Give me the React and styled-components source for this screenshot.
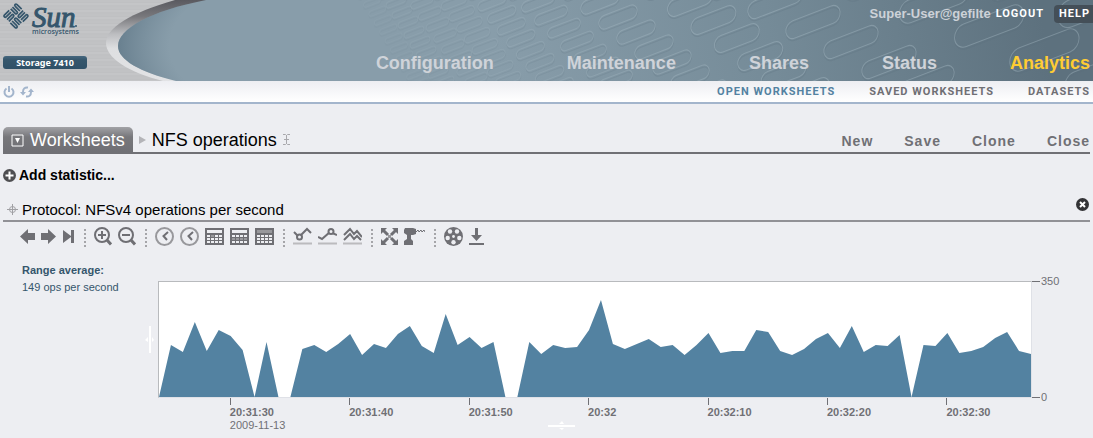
import { useState } from "react";
import styled, { createGlobalStyle } from "styled-components";

const GlobalStyle = createGlobalStyle`
  * {
    box-sizing: border-box;
  }

  body {
    background: #edeef2;
    color: #000;
    font-family: "Liberation Sans", Arial, sans-serif;
    margin: 0;
  }

  button {
    background: none;
    border: none;
    color: inherit;
    cursor: pointer;
    font: inherit;
    padding: 0;
  }

  a {
    color: inherit;
    text-decoration: none;
  }

  svg {
    display: block;
  }
`;

const mainLinks = ["Configuration", "Maintenance", "Shares", "Status", "Analytics"];
const subLinks = ["OPEN WORKSHEETS", "SAVED WORKSHEETS", "DATASETS"];
const actions = ["New", "Save", "Clone", "Close"];
const times = ["20:31:30", "20:31:40", "20:31:50", "20:32", "20:32:10", "20:32:20", "20:32:30"];

// one sample per second, in chart units
const samples = [
  0, 52, 45, 75, 46, 67, 61, 47, 0, 55, 0, 0, 48, 52, 45, 53, 63, 42, 53, 49, 63, 71, 51, 44, 83,
  52, 60, 49, 55, 0, 0, 55, 43, 52, 49, 50, 67, 97, 53, 48, 53, 58, 50, 52, 42, 52, 64, 44, 46, 46,
  67, 65, 46, 42, 48, 58, 64, 49, 71, 45, 52, 51, 62, 0, 52, 51, 64, 44, 46, 50, 59, 65, 46, 43,
];
const CHART_TOP = 115;

// diagonal chains of embossed pills, growing to the right
const chains = [
  { x: 372, slope: 0.6, dy: 9, w: 18, h: 5, o: 0.12 },
  { x: 396, slope: 0.6, dy: 10, w: 21, h: 6, o: 0.18 },
  { x: 422, slope: 0.7, dy: 11, w: 24, h: 7, o: 0.2 },
  { x: 454, slope: 0.7, dy: 11, w: 27, h: 8, o: 0.24 },
  { x: 492, slope: 0.8, dy: 12, w: 30, h: 9, o: 0.3 },
  { x: 538, slope: 1, dy: 13, w: 35, h: 10, o: 0.38 },
  { x: 600, slope: 1.2, dy: 15, w: 41, h: 13, o: 0.45 },
  { x: 690, slope: 1.3, dy: 18, w: 48, h: 16, o: 0.5 },
  { x: 775, slope: 1.9, dy: 20, w: 58, h: 17, o: 0.5 },
  { x: 934, slope: 2.3, dy: 24, w: 74, h: 22, o: 0.5 },
  { x: 1100, slope: 2.5, dy: 28, w: 90, h: 26, o: 0.5 },
];

function HeaderArt() {
  const pills = chains.flatMap((c) => {
    const list = [];
    for (let y = -c.dy; y < 100; y += c.dy) {
      list.push({ ...c, cx: c.x + y * c.slope, cy: y + 2 });
    }
    return list;
  });

  return (
    <ArtSvg width="100%" height="81" aria-hidden="true">
      <defs>
        <linearGradient id="sea" gradientUnits="userSpaceOnUse" x1="500" y1="81" x2="1040" y2="0">
          <stop offset="0" stopColor="#889daa" />
          <stop offset="0.5" stopColor="#758b98" />
          <stop offset="1" stopColor="#5d717e" />
        </linearGradient>
        <radialGradient id="edge" gradientUnits="userSpaceOnUse" cx="330" cy="46" r="214" gradientTransform="translate(0 23) scale(1 0.5)">
          <stop offset="0.75" stopColor="#6b8291" stopOpacity="0" />
          <stop offset="1" stopColor="#5f7787" stopOpacity="0.8" />
        </radialGradient>
        <linearGradient id="rim" x1="0" y1="0" x2="0" y2="1">
          <stop offset="0" stopColor="#5a5a60" />
          <stop offset="0.2" stopColor="#77777b" />
          <stop offset="0.42" stopColor="#bcbdc0" />
          <stop offset="0.6" stopColor="#dedfe1" />
          <stop offset="1" stopColor="#e2e3e5" />
        </linearGradient>
      </defs>
      <path d="M175 0C130 13 106 28 106 43C106 58 128 72 163 81H240V0Z" fill="url(#rim)" />
      <path d="M206 0C150 11 118 29 118 46C118 60 140 72 176 81H330V0Z" fill="#889daa" />
      <path d="M206 0C150 11 118 29 118 46C118 60 140 72 176 81H330V0Z" fill="url(#edge)" />
      <rect x="329" width="100%" height="81" fill="url(#sea)" />
      {pills.map((p, i) => (
        <g key={i} transform={`translate(${p.cx} ${p.cy}) rotate(-21) skewX(-14)`} fill="none" opacity={p.o}>
          <rect x={-p.w / 2} y={-p.h / 2 + 2} width={p.w} height={p.h} rx={p.h / 2} stroke="#5b707e" strokeOpacity="0.5" />
          <rect x={-p.w / 2} y={-p.h / 2} width={p.w} height={p.h} rx={p.h / 2} stroke="#a9bbc6" strokeOpacity="0.8" />
        </g>
      ))}
    </ArtSvg>
  );
}

function SunLogo() {
  return (
    <svg width="82" height="38" role="img" aria-label="Sun microsystems" fill="#35566c">
      <g transform="translate(13 14) rotate(45)" fill="none" stroke="#35566c" strokeWidth="1.7">
        {[0, 90, 180, 270].map((r) => (
          <g key={r} transform={`rotate(${r}) translate(-9.8 -9.8)`}>
            <path d="M9 1H2.500Q1 1 1 2.200Q1 3.500 2.500 3.500H9" />
            <path d="M1 6H7.300Q8.800 6 8.800 7.200Q8.800 8.500 7.300 8.500H1" />
          </g>
        ))}
      </g>
      <text x="29" y="25" fontFamily="Liberation Serif, serif" fontStyle="italic" fontSize="29" stroke="#35566c">Sun</text>
      <text x="29" y="32" fontFamily="Open Sans, sans-serif" fontSize="7" fontWeight="600">microsystems</text>
      <circle cx="73" cy="24" r="1" />
    </svg>
  );
}

function Clock() {
  return (
    <svg width="19" height="20" fill="none">
      <circle cx="9.5" cy="9.5" r="8.500" stroke="#98989c" strokeWidth="2" />
      <path d="M13 5L8.500 9L12 13" stroke="#6f6f74" strokeWidth="2" />
    </svg>
  );
}

function TableIcon({ band }) {
  return (
    <svg width="19" height="20">
      <path d="M0 1H19V18H0Z" fill="#6f6f74" />
      <path d="M2 3H17V6H2Z" fill={band === "top" ? "#98989c" : "#edeef2"} />
      {[8, 11, 14].map((y) =>
        [2, 6, 10, 14].map((x) => (
          <rect key={`${x}-${y}`} x={x} y={y} width="3" height="2" fill={(band === "row" && y === 11) || (band === "cell" && y === 8 && x === 6) ? "#98989c" : "#edeef2"} />
        ))
      )}
    </svg>
  );
}

function Trend({ d, cx, cy }) {
  return (
    <svg width="19" height="20" fill="none" stroke="#6f6f74" strokeWidth="2">
      <path d={d} />
      {cx && <circle cx={cx} cy={cy} r="2.500" fill="#edeef2" />}
      <path d="M0 16.500H19" stroke="#bbbbbe" />
    </svg>
  );
}

function Lens({ plus }) {
  return (
    <svg width="18" height="20" fill="none" stroke="#6f6f74" strokeWidth="2">
      <circle cx="8" cy="8" r="7" />
      <path d={plus ? "M4 8H12M8 4V12" : "M4 8H12"} />
      <path d="M12.500 12.500L17 17.500" strokeWidth="3" />
    </svg>
  );
}

const groups = [
  [
    ["Back", <svg width="15" height="20" fill="#6f6f74"><path d="M0 9.500L8 2V6H15V13H8V17Z" /></svg>],
    ["Forward", <svg width="15" height="20" fill="#6f6f74"><path d="M15 9.500L7 2V6H0V13H7V17Z" /></svg>],
    ["Go to now", <svg width="13" height="20" fill="#6f6f74"><path d="M1 3L9 9V3H12V16H9V10L1 16Z" /></svg>],
  ],
  [
    ["Zoom in", <Lens plus />],
    ["Zoom out", <Lens />],
  ],
  [
    ["Minute", <Clock />],
    ["Hour", <Clock />],
    ["Day", <TableIcon band="cell" />],
    ["Week", <TableIcon band="row" />],
    ["Month", <TableIcon band="top" />],
  ],
  [
    ["Show minimum", <Trend d="M1 5L6 10L14 2L18 6" cx={6.5} cy={10} />],
    ["Show maximum", <Trend d="M0 10L4 12L12 5L19 8" cx={13} cy={4.5} />],
    ["Compare", <Trend d="M1 8L7 2L11 7L14 4L19 10M1 13L7 7L11 12L14 9L18 13" />],
  ],
  [
    ["Crop outliers", (
      <svg width="17" height="20" fill="#6f6f74">
        <path d="M0 1H6L0 7ZM17 1V7L11 1ZM0 18V12L6 18ZM17 18H11L17 12Z" />
        <path d="M2 3L7 8M15 3L10 8M2 16L7 11M15 16L10 11" stroke="#6f6f74" strokeWidth="3" />
        <path d="M7 8H10V11H7Z" fill="#98989c" />
      </svg>
    )],
    ["Drill down", (
      <svg width="21" height="20" fill="#6f6f74">
        <path d="M1 1H9L12 2V7L9 8H7V12L9 14V18H0V14L3 12V8L0 6V3Z" />
        <path d="M12 5L14 3L15 5L17 3L18 5L20 3L21 5" fill="none" stroke="#6f6f74" />
      </svg>
    )],
  ],
  [
    ["Save dataset", (
      <svg width="19" height="20">
        <circle cx="9.500" cy="9.500" r="9.500" fill="#6f6f74" />
        <g fill="#edeef2">
          <circle cx="6" cy="4.500" r="2.200" />
          <circle cx="13" cy="4.500" r="2.200" />
          <circle cx="3.700" cy="11" r="2.200" />
          <circle cx="15.300" cy="11" r="2.200" />
          <circle cx="9.500" cy="15.300" r="2.200" />
          <circle cx="9.500" cy="9.500" r="1.400" />
        </g>
      </svg>
    )],
    ["Export", (
      <svg width="15" height="20" fill="#6f6f74">
        <path d="M6 1H9V8H13L7.500 14L2 8H6ZM0 16H15V18H0Z" />
      </svg>
    )],
  ],
];

function Toolbar() {
  return (
    <StyledToolbar>
      {groups.map((group, i) => (
        <ToolGroup key={i}>
          {group.map(([label, icon]) => (
            <button key={label} type="button" title={label} aria-label={label}>
              {icon}
            </button>
          ))}
        </ToolGroup>
      ))}
    </StyledToolbar>
  );
}

function Chart() {
  const last = samples.length - 1;
  const line = samples.map((v, i) => `L${i} ${CHART_TOP - v}`).join("");

  return (
    <ChartGrid>
      <RangeAverage>
        <strong>Range average:</strong>
        <span>149 ops per second</span>
      </RangeAverage>
      <SideHandle width="9" height="27" fill="#fff" aria-hidden="true">
        <path d="M4 0H6V27H4ZM0 14L3 11V16ZM9 14L7 11V16Z" />
      </SideHandle>
      <Plot>
        <svg width="100%" height={CHART_TOP} viewBox={`0 0 ${last} ${CHART_TOP}`} preserveAspectRatio="none">
          <path d={`M0 ${CHART_TOP}${line}L${last} ${CHART_TOP}Z`} fill="#5382a1" />
        </svg>
      </Plot>
      <ValueAxis>
        <span>350</span>
        <span>0</span>
      </ValueAxis>
      <TimeAxis>
        {times.map((time, i) => (
          <TimeTick key={time}>
            <strong>{time}</strong>
            {i === 0 && <span>2009-11-13</span>}
          </TimeTick>
        ))}
      </TimeAxis>
      <BottomHandle width="27" height="9" fill="#fff" aria-hidden="true">
        <path d="M0 4H27V6H0ZM14 0L16 3H11ZM14 9L16 7H11Z" />
      </BottomHandle>
    </ChartGrid>
  );
}

export default function App() {
  const [section, setSection] = useState("Analytics");
  const [sub, setSub] = useState("OPEN WORKSHEETS");

  return (
    <>
      <GlobalStyle />
      <Header>
        <HeaderArt />
        <Brand>
          <SunLogo />
          <Model>Storage 7410</Model>
        </Brand>
        <HeaderRight>
          <UserBar>
            <span>Super-User@gefilte</span>
            <CapsButton type="button">LOGOUT</CapsButton>
            <HelpButton type="button">HELP</HelpButton>
          </UserBar>
          <MainNav>
            {mainLinks.map((name) => (
              <MainLink key={name} href="#" $active={name === section} onClick={() => setSection(name)}>
                {name}
              </MainLink>
            ))}
          </MainNav>
        </HeaderRight>
      </Header>
      <SubBar>
        <Power>
          <button type="button" aria-label="Power off">
            <svg width="12" height="12" fill="none" stroke="#a3b5cc" strokeWidth="2">
              <path d="M3.500 2.500A4.500 4.500 0 1 0 8.500 2.500M6 0V6" />
            </svg>
          </button>
          <button type="button" aria-label="Restart">
            <svg width="14" height="12" fill="none" stroke="#a3b5cc" strokeWidth="2">
              <path d="M8 1.500Q3 1 3 6M6 10.500Q11 11 11 6" />
              <path d="M0 6H6L3 9.500ZM8 6H14L11 2.500Z" fill="#a3b5cc" stroke="none" />
            </svg>
          </button>
        </Power>
        <SubNav>
          {subLinks.map((name) => (
            <SubLink key={name} href="#" $active={name === sub} onClick={() => setSub(name)}>
              {name}
            </SubLink>
          ))}
        </SubNav>
      </SubBar>
      <Main>
        <TitleRow>
          <WorksheetTab type="button">
            <svg width="13" height="13">
              <path d="M1 1H12V12H1Z" fill="none" stroke="#fff" />
              <path d="M4 4H9L6.500 9Z" fill="#fff" />
            </svg>
            Worksheets
          </WorksheetTab>
          <svg width="7" height="8" fill="#b4b4b8" aria-hidden="true">
            <path d="M0 0L7 4L0 8Z" />
          </svg>
          <h1>NFS operations</h1>
          <button type="button" aria-label="Rename">
            <svg width="7" height="11" fill="none" stroke="#a8a8ac">
              <path d="M0 0.500H2.500L3.500 1.500L4.500 0.500H7M3.500 1V10M1 5.500H6M0 10.500H2.500L3.500 9.500L4.500 10.500H7" />
            </svg>
          </button>
          <Actions>
            {actions.map((name) => (
              <button key={name} type="button">
                {name}
              </button>
            ))}
          </Actions>
        </TitleRow>
        <AddStatistic type="button">
          <svg width="13" height="13">
            <circle cx="6.500" cy="6.500" r="6.500" fill="#4e4e51" />
            <path d="M2.500 6.500H10.500M6.500 2.500V10.500" stroke="#fff" strokeWidth="2" />
          </svg>
          Add statistic...
        </AddStatistic>
        <StatHeader>
          <svg width="11" height="11" fill="none" stroke="#a0a0a4" aria-hidden="true">
            <circle cx="5.500" cy="5.500" r="3" />
            <path d="M0 5.500H11M5.500 0V11" />
          </svg>
          <h2>Protocol: NFSv4 operations per second</h2>
          <CloseStat type="button" aria-label="Close statistic">
            <svg width="13" height="13">
              <circle cx="6.500" cy="6.500" r="6.500" fill="#333336" />
              <path d="M4 4L9 9M9 4L4 9" stroke="#fff" strokeWidth="2" />
            </svg>
          </CloseStat>
        </StatHeader>
        <Toolbar />
        <Chart />
      </Main>
    </>
  );
}

const Header = styled.header`
  background: repeating-linear-gradient(
    #c1c2c4 0 2px,
    #bfc0c2 2px 3px,
    #c4c5c7 3px 5px,
    #c0c1c3 5px 7px
  );
  display: flex;
  height: 81px;
  justify-content: space-between;
  position: relative;
`;

const ArtSvg = styled.svg`
  left: 0;
  position: absolute;
  top: 0;
`;

const Brand = styled.div`
  display: flex;
  flex-direction: column;
  justify-content: space-between;
  padding: 2px 0 12px 3px;
  position: relative;
`;

const Model = styled.div`
  background: linear-gradient(#45677f, #35566c 30%, #2f5067);
  border-radius: 3px;
  color: #fff;
  font-family: "Noto Sans", sans-serif;
  font-size: 9px;
  font-weight: 700;
  line-height: 13px;
  text-align: center;
  width: 84px;
`;

const HeaderRight = styled.div`
  display: flex;
  flex-direction: column;
  justify-content: space-between;
  padding: 5px 0 7px;
  position: relative;
`;

const UserBar = styled.div`
  align-items: center;
  color: #cdd2d8;
  display: flex;
  font-size: 13px;
  font-weight: 700;
  gap: 5px;
  justify-content: flex-end;
  line-height: 18px;
`;

const CapsButton = styled.button`
  color: #fff;
  font-family: Roboto, sans-serif;
  font-size: 11px;
  font-weight: 700;
  letter-spacing: 1px;
  line-height: 18px;
`;

const HelpButton = styled(CapsButton)`
  background: #444f58;
  border-radius: 4px 0 0 4px;
  margin-left: 5px;
  padding: 0 3px 0 5px;
`;

const MainNav = styled.nav`
  display: flex;
  gap: 73px;
  padding-right: 3px;
`;

const MainLink = styled.a`
  color: ${({ $active }) => ($active ? "#ffcc33" : "#cfd3d9")};
  font-size: 18px;
  font-weight: 700;
  line-height: 22px;
`;

const SubBar = styled.div`
  align-items: center;
  background: linear-gradient(#edeef2, #fff);
  border-bottom: 2px solid #a3b5cc;
  display: flex;
  height: 23px;
  justify-content: space-between;
  padding: 0 3px;
`;

const Power = styled.div`
  display: flex;
  gap: 5px;
`;

const SubNav = styled.nav`
  display: flex;
  gap: 34px;
`;

const SubLink = styled.a`
  color: ${({ $active }) => ($active ? "#5382a1" : "#6f6f74")};
  font-family: Roboto, sans-serif;
  font-size: 11px;
  font-weight: 700;
  letter-spacing: 1px;
`;

const Main = styled.main`
  padding: 23px 3px 0;
`;

const TitleRow = styled.div`
  align-items: center;
  border-bottom: 2px solid #707075;
  display: flex;
  gap: 6px;
  height: 27px;

  h1 {
    font-size: 18px;
    font-weight: 400;
    margin: 0;
    padding-top: 2px;
  }
`;

const WorksheetTab = styled.button`
  align-items: center;
  background: linear-gradient(#a2a2a6, #77777b 40%, #707075);
  border-radius: 5px 5px 0 0;
  color: #fff;
  display: flex;
  font-size: 18px;
  gap: 6px;
  height: 25px;
  padding: 2px 8px 0;
`;

const Actions = styled.div`
  color: #707075;
  display: flex;
  font-size: 14px;
  font-weight: 700;
  gap: 31px;
  margin-left: auto;
  padding-top: 2px;

  button {
    letter-spacing: 1px;
  }
`;

const AddStatistic = styled.button`
  align-items: center;
  display: flex;
  font-size: 14px;
  font-weight: 700;
  gap: 3px;
  height: 42px;
`;

const StatHeader = styled.div`
  align-items: center;
  border-bottom: 2px solid #919196;
  display: flex;
  gap: 4px;
  height: 26px;
  padding: 2px 1px 0 4px;

  h2 {
    flex: 1;
    font-size: 15px;
    font-weight: 400;
    margin: 0;
  }
`;

const CloseStat = styled.button`
  align-self: flex-start;
`;

const StyledToolbar = styled.div`
  align-items: center;
  display: flex;
  height: 30px;
  padding-left: 17px;
`;

const ToolGroup = styled.div`
  display: flex;
  gap: 6px;

  & + & {
    background: linear-gradient(#a5a5a9 2px, transparent 2px) 9px 2px / 2px 4px repeat-y;
    padding-left: 19px;
  }
`;

const ChartGrid = styled.div`
  display: grid;
  grid-template-columns: 142px 13px 1fr 58px;
`;

const RangeAverage = styled.div`
  color: #35566c;
  display: flex;
  flex-direction: column;
  font-size: 11px;
  line-height: 17px;
  padding: 10px 0 0 19px;
`;

const SideHandle = styled.svg`
  align-self: center;
  margin-top: 29px;
`;

const Plot = styled.div`
  background: #fff;
  border: 1px solid #b8babd;
  border-bottom-color: #dfe1e7;
  border-right-color: #dfe1e7;
  margin-top: 29px;
`;

const ValueAxis = styled.div`
  color: #707075;
  display: flex;
  flex-direction: column;
  font-size: 11px;
  justify-content: space-between;
  line-height: 16px;
  margin: 21px 0 -7px;

  span {
    align-items: center;
    display: flex;
    gap: 1px;
  }

  span::before {
    background: #707075;
    content: "";
    height: 1px;
    width: 8px;
  }
`;

const TimeAxis = styled.div`
  display: grid;
  grid-column: 3;
  grid-row: 2;
  grid-template-columns: repeat(6, 10fr) 7fr;
  padding: 0 2px 0 8.22%;
`;

const TimeTick = styled.div`
  color: #707075;
  display: flex;
  flex-direction: column;
  font-size: 11px;
  line-height: 13px;

  &::before {
    background: #707075;
    content: "";
    height: 7px;
    margin-bottom: 1px;
    width: 1px;
  }
`;

const BottomHandle = styled.svg`
  align-self: end;
  grid-column: 3;
  grid-row: 2;
  justify-self: center;
  margin: 0 68px 2px 0;
`;
